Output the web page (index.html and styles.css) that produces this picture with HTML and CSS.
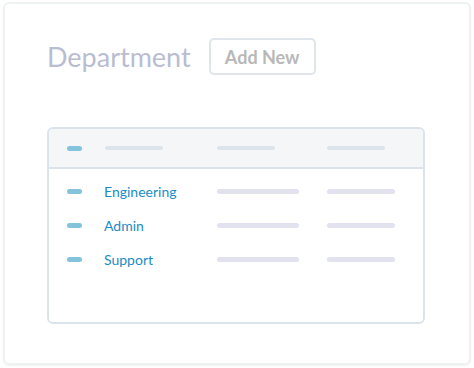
FILE: index.html
```html
<!DOCTYPE html>
<html>
<head>
<meta charset="utf-8">
<link rel="stylesheet" href="styles.css">
</head>
<body>
<div class="card">
  <div class="head">
    <h1 class="title">Department</h1>
    <button class="add">Add New</button>
  </div>
  <div class="table">
    <div class="thead">
      <span class="dot"></span>
      <span class="hbar c1"></span>
      <span class="hbar c2"></span>
      <span class="hbar c3"></span>
    </div>
    <div class="tbody">
      <div class="row"><span class="dot"></span><span class="name">Engineering</span><span class="bar b1"></span><span class="bar b2"></span></div>
      <div class="row"><span class="dot"></span><span class="name">Admin</span><span class="bar b1"></span><span class="bar b2"></span></div>
      <div class="row"><span class="dot"></span><span class="name">Support</span><span class="bar b1"></span><span class="bar b2"></span></div>
    </div>
  </div>
</div>
</body>
</html>
```
FILE: styles.css
```css
html, body { margin: 0; padding: 0; background: #fff; }
body { font-family: Lato, "Open Sans", sans-serif; width: 474px; height: 368px; overflow: hidden; }
.card {
  box-sizing: border-box;
  margin: 2px 0 0 3px;
  width: 468px;
  height: 363px;
  border: 2px solid #eef3f2;
  border-radius: 6px;
  box-shadow: 0 1px 2px rgba(0,0,0,0.06);
  padding: 34px 0 0 42px;
}
.head { display: flex; align-items: center; height: 37px; }
.title {
  margin: 0;
  font-weight: 400;
  font-size: 27px;
  color: #b9bdd1;
  letter-spacing: 0;
}
.add {
  margin-left: 18px;
  box-sizing: border-box;
  width: 107px;
  height: 37px;
  border: 2px solid #dfe5ea;
  border-radius: 5px;
  background: #fff;
  font-family: Lato, sans-serif;
  font-weight: 700;
  font-size: 18px;
  color: #b8b8b8;
  padding: 0;
}
.table {
  box-sizing: border-box;
  margin-top: 52px;
  margin-left: 0;
  width: 378px;
  height: 197px;
  border: 2px solid #dde3ea;
  border-radius: 6px;
  overflow: hidden;
}
.thead {
  height: 38px;
  background: #f4f6f8;
  border-bottom: 2px solid #dde3ea;
  display: flex;
  align-items: center;
  padding-left: 18px;
}
.dot { display: block; width: 15px; height: 5px; border-radius: 3px; background: #84c3dc; flex: none; }
.hbar { display: block; height: 4px; border-radius: 2px; background: #dde3ea; width: 58px; }
.thead .c1 { margin-left: 23px; }
.thead .c2 { margin-left: 54px; }
.thead .c3 { margin-left: 52px; }
.tbody { padding-top: 5px; }
.row { display: flex; align-items: center; height: 34px; padding-left: 18px; }
.name { width: 113px; margin-left: 22px; font-size: 14px; color: #1a8cc6; }
.bar { display: block; height: 5px; border-radius: 3px; background: #e2e2ef; }
.b1 { width: 82px; }
.b2 { width: 68px; margin-left: 28px; }
```
